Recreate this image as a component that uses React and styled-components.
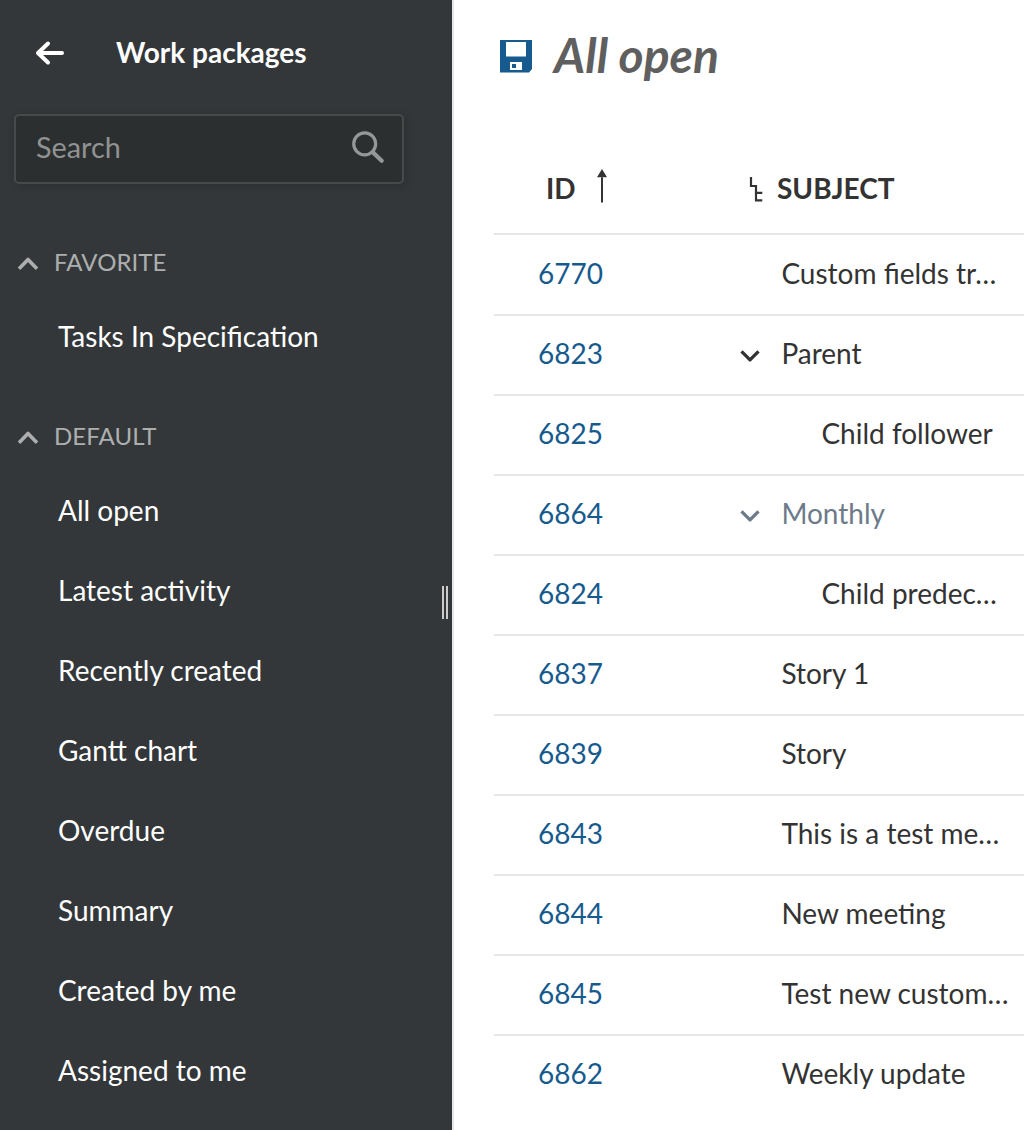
import React from 'react';
import styled, { createGlobalStyle } from 'styled-components';

const GlobalStyle = createGlobalStyle`
  * { box-sizing: border-box; }
  body {
    margin: 0;
    background: #fff;
    color: #333;
    font-family: Lato, "Liberation Sans", sans-serif;
    font-size: 28px;
    overflow: hidden;
  }
`;

const Page = styled.div`
  display: flex;
  width: 1024px;
  height: 1130px;
  overflow: hidden;
`;

const Sidebar = styled.nav`
  display: flex;
  width: 454px;
  flex: none;
  background: #333739;
  border-right: 2px solid #e7e7e7;
`;

const SidebarContent = styled.div`
  flex: 1;
  min-width: 0;
`;

const ResizeHandle = styled.div`
  align-self: flex-start;
  width: 6px;
  height: 33px;
  margin: 586px 4px 0 0;
  border: solid #ccc;
  border-width: 0 2px;
`;

const SidebarHeader = styled.header`
  display: flex;
  align-items: center;
  height: 106px;
  padding-left: 34px;
  gap: 50px;
`;

const SidebarTitle = styled.h2`
  margin: 0;
  padding-bottom: 2px;
  color: #fff;
  font-size: 28px;
  font-weight: 700;
  line-height: 34px;
`;

const SearchBox = styled.div`
  display: flex;
  align-items: center;
  justify-content: space-between;
  width: 390px;
  height: 70px;
  margin: 8px 0 0 14px;
  padding: 0 18px 4px 20px;
  color: #919393;
  font-size: 28.8px;
  background: #2c2f30;
  border: 2px solid #464a4b;
  border-radius: 5px;
  box-shadow: 2px 2px 8px rgba(0, 0, 0, 0.14);
`;

const MenuSection = styled.section`
  padding-top: ${(p) => p.$top}px;
`;

const SectionTitle = styled.h3`
  display: flex;
  align-items: center;
  gap: 15px;
  height: 30px;
  margin: 0;
  padding-left: 17px;
  color: #adafaf;
  font-size: 24px;
  font-weight: 400;
  line-height: 30px;
  letter-spacing: 0.08px;
`;

const SectionLabel = styled.span`
  padding-bottom: 1px;
`;

const MenuList = styled.ul`
  margin: 0;
  padding: 19px 0 0;
  list-style: none;
`;

const MenuItem = styled.li`
  height: 80px;
  padding-left: 58px;
  color: #fff;
  line-height: 80px;
`;

const Main = styled.main`
  flex: 1;
  min-width: 0;
  padding-left: 40px;
`;

const Toolbar = styled.header`
  display: flex;
  align-items: center;
  height: 112px;
  padding-left: 6px;
  gap: 22px;
`;

const PageTitle = styled.h1`
  margin: 0;
  padding-bottom: 2px;
  color: #5f5f5f;
  font-size: 48px;
  font-style: italic;
  font-weight: 700;
  line-height: 58px;
`;

const Row = styled.div`
  display: grid;
  grid-template-columns: 245px 1fr;
  height: 80px;
  line-height: 74px;
  border-bottom: 2px solid ${(p) => (p.$last ? 'transparent' : '#e6e6e6')};
`;

const HeaderRow = styled(Row)`
  height: 123px;
  padding-top: 32px;
  line-height: 90px;
  font-weight: 700;
`;

const TableBody = styled.div`
  padding-top: 1px;
`;

const IdHeading = styled.div`
  display: flex;
  height: 88px;
  align-items: center;
  gap: 21px;
  padding-left: 52px;
`;

const SubjectHeading = styled.div`
  display: flex;
  height: 88px;
  align-items: center;
  gap: 14px;
  padding-left: 10px;
`;

const IdLink = styled.a`
  padding-left: 44px;
  color: #175a8e;
`;

const Subject = styled.div`
  display: flex;
  height: 74px;
  align-items: center;
  padding-left: ${(p) => p.$level * 40}px;
  color: ${(p) => (p.$muted ? '#6c7a89' : '#333')};
  white-space: nowrap;
`;

const Toggle = styled.span`
  display: flex;
  align-items: center;
  width: 42.4px;
  padding: 4px 0 0 0.5px;
  flex: none;
`;

const Icon = styled.svg`
  display: block;
  flex: none;
  overflow: visible;
`;

const BackIcon = () => (
  <Icon width="32" height="26" viewBox="0 0 32 26" fill="none" stroke="#fff" strokeWidth="4" strokeLinecap="round" strokeLinejoin="round">
    <path d="M14 3.5 4 13l10 9.5M4.5 13H28" />
  </Icon>
);

const SearchIcon = () => (
  <Icon width="32" height="32" viewBox="0 0 32 32" fill="none" stroke="#969898">
    <circle cx="12.7" cy="12.8" r="11" strokeWidth="3.2" />
    <path d="m20.8 21.2 8.9 8.6" strokeWidth="4.2" strokeLinecap="round" />
  </Icon>
);

const CollapseIcon = () => (
  <Icon width="22" height="16" viewBox="0 0 22 16" fill="none" stroke="currentColor" strokeWidth="3.6" strokeLinejoin="round">
    <path d="m2 14.8 9-9.4 9 9.4" />
  </Icon>
);

const ExpandIcon = () => (
  <Icon width="20" height="14" viewBox="0 0 20 14" fill="none" stroke="currentColor" strokeWidth="3.3" strokeLinejoin="round">
    <path d="m1.5 3.4 8.5 8.5 8.5-8.5" />
  </Icon>
);

const SaveIcon = () => (
  <Icon width="32" height="32" viewBox="0 0 32 32">
    <path fill="#175a8e" fillRule="evenodd" d="M0 0h32v29l-3 3.4H0zM6 2v14.5h20V2zM10 22v8h12v-8z" />
    <path fill="#175a8e" d="M12 24h4v4h-4z" />
  </Icon>
);

const SortIcon = () => (
  <Icon width="10" height="38" viewBox="0 0 10 38" fill="#333">
    <path d="M5 0 10 8.2H0zM4 8.6h2v24.9H4z" />
  </Icon>
);

const HierarchyIcon = () => (
  <Icon width="14" height="22" viewBox="0 0 14 22" fill="none" stroke="#333" strokeWidth="2.2">
    <path d="M2 0v9h5v14.3h6.3M7 15.8h6.3" />
  </Icon>
);

const favorites = ['Tasks In Specification'];
const defaults = [
  'All open',
  'Latest activity',
  'Recently created',
  'Gantt chart',
  'Overdue',
  'Summary',
  'Created by me',
  'Assigned to me',
];

const workPackages = [
  { id: 6770, subject: 'Custom fields tr…' },
  { id: 6823, subject: 'Parent', parent: true },
  { id: 6825, subject: 'Child follower', level: 1 },
  { id: 6864, subject: 'Monthly', parent: true, muted: true },
  { id: 6824, subject: 'Child predec…', level: 1 },
  { id: 6837, subject: 'Story 1' },
  { id: 6839, subject: 'Story' },
  { id: 6843, subject: 'This is a test me…' },
  { id: 6844, subject: 'New meeting' },
  { id: 6845, subject: 'Test new custom…' },
  { id: 6862, subject: 'Weekly update' },
];

const Menu = ({ title, items, top }) => (
  <MenuSection $top={top}>
    <SectionTitle>
      <CollapseIcon />
      <SectionLabel>{title}</SectionLabel>
    </SectionTitle>
    <MenuList>
      {items.map((item) => (
        <MenuItem key={item}>{item}</MenuItem>
      ))}
    </MenuList>
  </MenuSection>
);

export default function App() {
  return (
    <>
      <GlobalStyle />
      <Page>
        <Sidebar>
          <SidebarContent>
            <SidebarHeader>
              <BackIcon />
              <SidebarTitle>Work packages</SidebarTitle>
            </SidebarHeader>
            <SearchBox>
              Search
              <SearchIcon />
            </SearchBox>
            <Menu title="FAVORITE" items={favorites} top={63} />
            <Menu title="DEFAULT" items={defaults} top={45} />
          </SidebarContent>
          <ResizeHandle />
        </Sidebar>
        <Main>
          <Toolbar>
            <SaveIcon />
            <PageTitle>All open</PageTitle>
          </Toolbar>
          <HeaderRow>
            <IdHeading>
              ID
              <SortIcon />
            </IdHeading>
            <SubjectHeading>
              <HierarchyIcon />
              SUBJECT
            </SubjectHeading>
          </HeaderRow>
          <TableBody>
            {workPackages.map((wp, i) => (
              <Row key={wp.id} $last={i === workPackages.length - 1}>
                <IdLink>{wp.id}</IdLink>
                <Subject $level={wp.level || 0} $muted={wp.muted}>
                  <Toggle>{wp.parent && <ExpandIcon />}</Toggle>
                  {wp.subject}
                </Subject>
              </Row>
            ))}
          </TableBody>
        </Main>
      </Page>
    </>
  );
}
